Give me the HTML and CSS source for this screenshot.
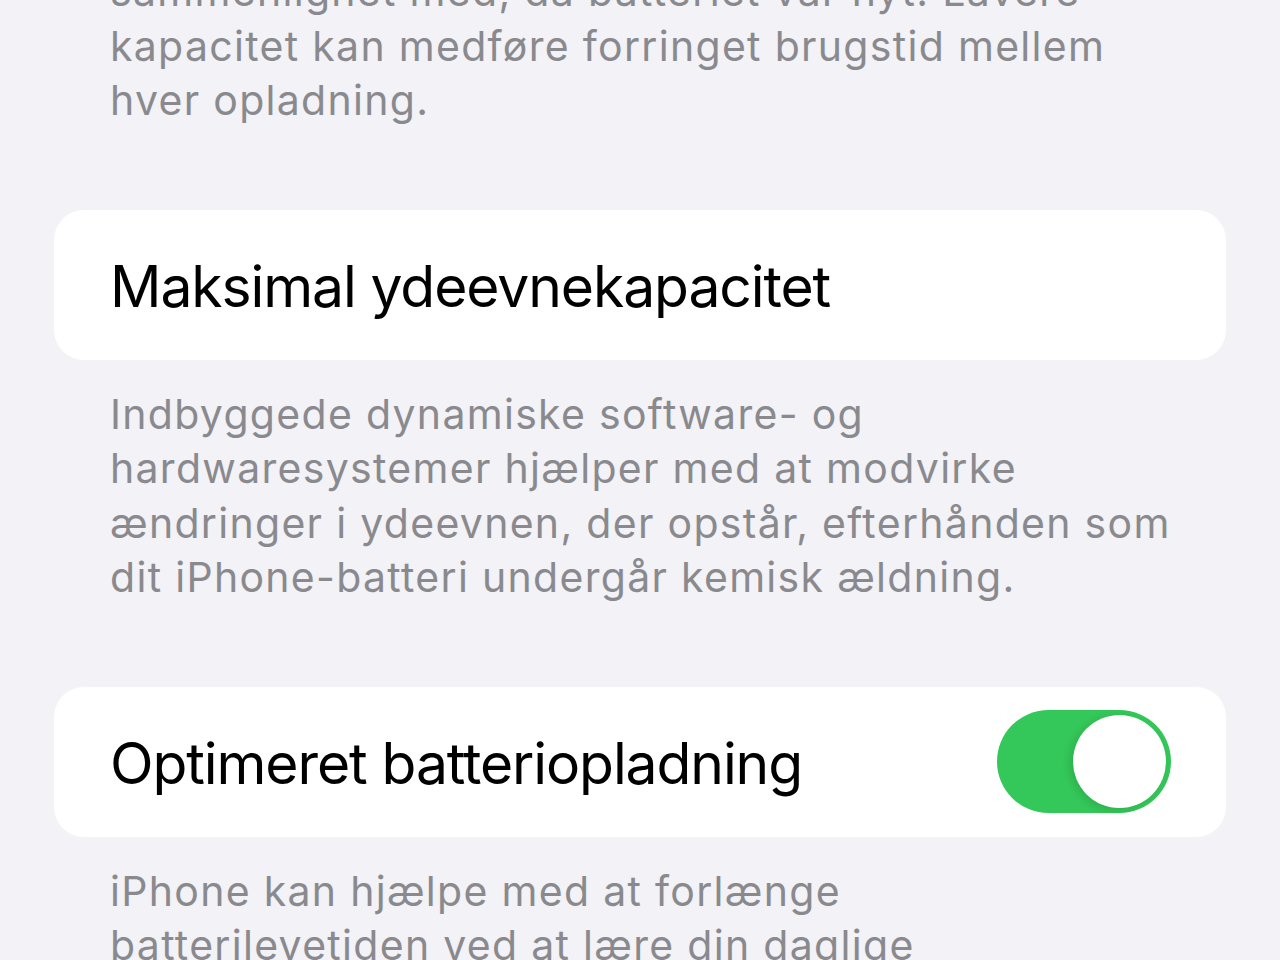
FILE: index.html
```html
<!DOCTYPE html>
<html lang="da">
<head>
    <meta charset="UTF-8">
    <meta name="viewport" content="width=device-width, initial-scale=1.0">
    <title>Batteritilstand</title>
    <link rel="stylesheet" href="styles.css">
</head>
<body>

    <div class="page">
        <p class="note note-top">
            sammenlignet med, da batteriet var nyt. Lavere<br>
            kapacitet kan medføre forringet brugstid mellem<br>
            hver opladning.
        </p>

        <div class="card">
            <span class="card-title">Maksimal ydeevnekapacitet</span>
        </div>

        <p class="note">
            Indbyggede dynamiske software- og<br>
            hardwaresystemer hjælper med at modvirke<br>
            ændringer i ydeevnen, der opstår, efterhånden som<br>
            dit iPhone-batteri undergår kemisk ældning.
        </p>

        <div class="card">
            <span class="card-title">Optimeret batteriopladning</span>
            <div class="switch on">
                <div class="knob"></div>
            </div>
        </div>

        <p class="note">
            iPhone kan hjælpe med at forlænge<br>
            batterilevetiden ved at lære din daglige<br>
            opladningsrutine at kende.
        </p>
    </div>

</body>
</html>
```

FILE: styles.css
```css
body {
    margin: 0px;
    background-color: #f2f2f7;
    font-family: Inter, "Noto Sans", sans-serif;
    overflow: hidden;
}

.page {
    padding: 0px 54px;
}

.note {
    margin: 0px;
    padding: 0px 56px;
    color: #8a8a8e;
    font-size: 41px;
    line-height: 54.5px;
    letter-spacing: 1.3px;
    white-space: nowrap;
}

.note-top {
    margin-top: -36px;
    margin-bottom: 82px;
}

.card {
    background-color: white;
    border-radius: 30px;
    height: 150px;
    padding: 0px 55px 0px 56px;
    display: flex;
    align-items: center;
    justify-content: space-between;
    margin-bottom: 27px;
}

.card + .note {
    margin-bottom: 82px;
}

.card-title {
    color: black;
    font-size: 57px;
    letter-spacing: -1.1px;
    margin-top: 4px;
}

.switch {
    width: 174px;
    height: 103px;
    border-radius: 52px;
    background-color: #e9e9eb;
    position: relative;
}

.switch.on {
    background-color: #34c759;
}

.knob {
    position: absolute;
    top: 5px;
    right: 5px;
    width: 93px;
    height: 93px;
    border-radius: 50%;
    background-color: white;
    box-shadow: -3px 2px 8px rgba(0, 0, 0, 0.12);
}
```
